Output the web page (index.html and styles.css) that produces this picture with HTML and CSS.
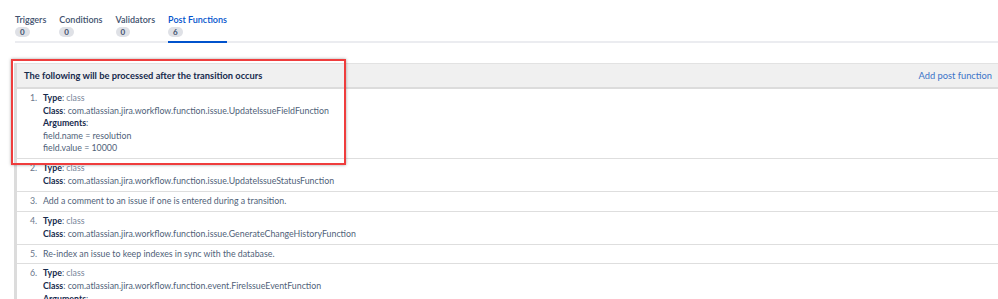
FILE: index.html
```html
<!DOCTYPE html>
<html lang="en">
<head>
    <meta charset="UTF-8">
    <title>Post Functions</title>
    <link rel="stylesheet" href="styles.css">
</head>
<body>
    <div class="tabs">
        <div class="tab"><span class="tab-name">Triggers</span><span class="badge">0</span></div>
        <div class="tab"><span class="tab-name">Conditions</span><span class="badge">0</span></div>
        <div class="tab"><span class="tab-name">Validators</span><span class="badge">0</span></div>
        <div class="tab active"><span class="tab-name">Post Functions</span><span class="badge">6</span></div>
    </div>

    <div class="panel">
        <div class="panel-head">
            <span class="panel-title">The following will be processed after the transition occurs</span>
            <a class="add-link" href="#">Add post function</a>
        </div>
        <ol class="functions">
            <li>
                <div><b>Type</b>: <span class="muted">class</span></div>
                <div><b>Class</b>: com.atlassian.jira.workflow.function.issue.UpdateIssueFieldFunction</div>
                <div><b>Arguments</b>:</div>
                <div>field.name = resolution</div>
                <div>field.value = 10000</div>
            </li>
            <li>
                <div><b>Type</b>: <span class="muted">class</span></div>
                <div><b>Class</b>: com.atlassian.jira.workflow.function.issue.UpdateIssueStatusFunction</div>
            </li>
            <li>
                <div>Add a comment to an issue if one is entered during a transition.</div>
            </li>
            <li>
                <div><b>Type</b>: <span class="muted">class</span></div>
                <div><b>Class</b>: com.atlassian.jira.workflow.function.issue.GenerateChangeHistoryFunction</div>
            </li>
            <li>
                <div>Re-index an issue to keep indexes in sync with the database.</div>
            </li>
            <li>
                <div><b>Type</b>: <span class="muted">class</span></div>
                <div><b>Class</b>: com.atlassian.jira.workflow.function.event.FireIssueEventFunction</div>
                <div><b>Arguments</b>:</div>
            </li>
        </ol>
        <div class="highlight-box"></div>
    </div>
</body>
</html>
```

FILE: styles.css
```css
body {
    margin: 0;
    font-family: Lato, "Open Sans", sans-serif;
    font-size: 8.8px;
    color: #42526e;
    background: #fff;
}
.tabs {
    display: flex;
    gap: 13px;
    margin-left: 15px;
    padding-top: 14px;
    border-bottom: 2px solid #ebecf0;
}
.tab {
    display: flex;
    flex-direction: column;
    align-items: flex-start;
    padding-bottom: 4px;
    margin-bottom: -2px;
    border-bottom: 2px solid transparent;
}
.tab-name {
    font-size: 9px;
    line-height: 12px;
    font-weight: 600;
    color: #42526e;
}
.tab.active {
    border-bottom-color: #0052cc;
}
.tab.active .tab-name {
    color: #0052cc;
}
.badge {
    margin-top: 1px;
    background: #dfe1e6;
    color: #42526e;
    border-radius: 5px;
    font-size: 8px;
    font-weight: 700;
    line-height: 10px;
    padding: 0 5px;
}
.panel {
    position: relative;
    margin: 20px 0 0 14px;
    border-left: 3px solid #dcdcdc;
}
.panel-head {
    display: flex;
    justify-content: space-between;
    align-items: center;
    height: 23px;
    padding: 0 6px 0 7px;
    background: #f0f0f0;
    border-top: 1px solid #e2e2e2;
    border-bottom: 2px solid #dcdcdc;
    font-size: 9.3px;
}
.panel-title {
    font-weight: 700;
    color: #172b4d;
}
.add-link {
    color: #3b73c8;
    text-decoration: none;
}
.functions {
    margin: 0;
    padding: 0;
    list-style: none;
    counter-reset: fn;
}
.functions li {
    counter-increment: fn;
    position: relative;
    padding: 3px 0 3.4px 26px;
    line-height: 12.6px;
    color: #505f79;
    border-bottom: 1px solid #dedede;
}
.functions li::before {
    content: counter(fn) ".";
    position: absolute;
    left: 13px;
    top: 3px;
    color: #6b778c;
}
.functions b {
    color: #172b4d;
    font-weight: 700;
}
.muted {
    color: #7a869a;
}
.highlight-box {
    position: absolute;
    left: -6px;
    top: -4px;
    width: 331px;
    height: 102px;
    border: 2px solid #ef3d3d;
    box-shadow: 0 0 3px rgba(0, 0, 0, 0.35);
    pointer-events: none;
}
```
